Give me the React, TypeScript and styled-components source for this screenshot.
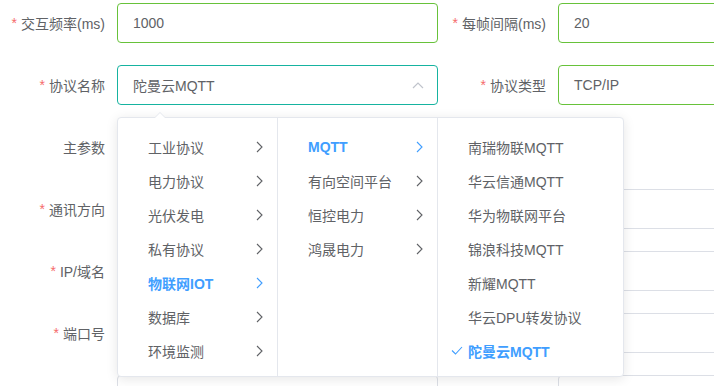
import React from 'react'
import styled, { createGlobalStyle } from 'styled-components'

const GlobalStyle = createGlobalStyle`
	html, body {
		margin: 0;
		padding: 0;
		overflow: hidden;
		background: #ffffff;
	}
	body {
		font-family: 'Liberation Sans', 'Noto Sans CJK SC', sans-serif;
		-webkit-font-smoothing: antialiased;
	}
	* {
		box-sizing: border-box;
	}
`

const FormGrid = styled.div`
	position: relative;
	width: 714px;
	height: 386px;
	overflow: hidden;
	padding-top: 3px;
	display: grid;
	grid-template-columns: 117px 321px 120px 321px;
	grid-auto-rows: 40px;
	row-gap: 22px;
`

const FieldLabel = styled.label`
	display: flex;
	align-items: center;
	justify-content: flex-end;
	padding-right: 12px;
	font-size: 14px;
	color: #606266;
	white-space: nowrap;
`

const Asterisk = styled.span`
	color: #f56c6c;
	margin-right: 4px;
`

const InputBox = styled.div<{ tone?: 'ok' | 'focus' | 'idle' }>`
	display: flex;
	align-items: center;
	justify-content: space-between;
	padding: 0 13px 0 15px;
	border-radius: 4px;
	border: 1px solid
		${(p) => (p.tone === 'ok' ? '#67c23a' : p.tone === 'focus' ? '#16b3a0' : '#dcdfe6')};
	font-size: 14px;
	color: #606266;
	background: #ffffff;
`

const Empty = styled.div``

const Cascader = styled.div`
	position: absolute;
	left: 117px;
	top: 117px;
	display: flex;
	height: 260px;
	background: #ffffff;
	border: 1px solid #e4e7ed;
	border-radius: 4px;
	box-shadow: 0 2px 12px 0 rgba(0, 0, 0, 0.1);
	z-index: 10;

	&::before,
	&::after {
		content: '';
		position: absolute;
		left: 36px;
		width: 0;
		height: 0;
		border: 6px solid transparent;
		border-top-width: 0;
	}
	&::before {
		top: -6px;
		border-bottom-color: #e4e7ed;
	}
	&::after {
		top: -5px;
		border-bottom-color: #ffffff;
	}
`

const Menu = styled.ul<{ width: number }>`
	list-style: none;
	margin: 0;
	padding: 12px 0 10px 0;
	width: ${(p) => p.width}px;
	&:not(:last-child) {
		border-right: 1px solid #e4e7ed;
	}
`

const MenuItem = styled.li<{ active?: boolean }>`
	position: relative;
	height: 34px;
	display: flex;
	align-items: center;
	padding: 0 14px 0 30px;
	font-size: 14px;
	color: ${(p) => (p.active ? '#409eff' : '#606266')};
	font-weight: ${(p) => (p.active ? 700 : 400)};
	white-space: nowrap;
`

const ItemLabel = styled.span`
	flex: 1;
`

const CheckMark = styled.svg`
	position: absolute;
	left: 13px;
	top: 12px;
`

const Chevron = ({ color }: { color: string }) => (
	<svg width="7" height="12" viewBox="0 0 7 12">
		<path d="M1 1 L6 6 L1 11" fill="none" stroke={color} strokeWidth="1.1" />
	</svg>
)

const ArrowUp = () => (
	<svg width="12" height="7" viewBox="0 0 12 7">
		<path d="M1 6 L6 1 L11 6" fill="none" stroke="#c0c4cc" strokeWidth="1.2" />
	</svg>
)

const Label = ({ text, required }: { text: string; required?: boolean }) => (
	<FieldLabel>
		{required && <Asterisk>*</Asterisk>}
		{text}
	</FieldLabel>
)

const level1 = ['工业协议', '电力协议', '光伏发电', '私有协议', '物联网IOT', '数据库', '环境监测']
const level2 = ['MQTT', '有向空间平台', '恒控电力', '鸿晟电力']
const level3 = [
	'南瑞物联MQTT',
	'华云信通MQTT',
	'华为物联网平台',
	'锦浪科技MQTT',
	'新耀MQTT',
	'华云DPU转发协议',
	'陀曼云MQTT',
]

export default function App() {
	return (
		<>
			<GlobalStyle />
			<FormGrid>
				<Label text="交互频率(ms)" required />
				<InputBox tone="ok">1000</InputBox>
				<Label text="每帧间隔(ms)" required />
				<InputBox tone="ok">20</InputBox>

				<Label text="协议名称" required />
				<InputBox tone="focus">
					<span>陀曼云MQTT</span>
					<ArrowUp />
				</InputBox>
				<Label text="协议类型" required />
				<InputBox tone="ok">TCP/IP</InputBox>

				<Label text="主参数" />
				<Empty />
				<Empty />
				<Empty />

				<Label text="通讯方向" required />
				<InputBox />
				<Label text="" />
				<InputBox />

				<Label text="IP/域名" required />
				<InputBox />
				<Label text="" />
				<InputBox />

				<Label text="端口号" required />
				<InputBox />
				<Label text="" />
				<InputBox />

				<Label text="" />
				<InputBox />
				<Label text="" />
				<InputBox />

				<Cascader>
					<Menu width={160}>
						{level1.map((x) => (
							<MenuItem key={x} active={x === '物联网IOT'}>
								<ItemLabel>{x}</ItemLabel>
								<Chevron color={x === '物联网IOT' ? '#409eff' : '#606266'} />
							</MenuItem>
						))}
					</Menu>
					<Menu width={160}>
						{level2.map((x) => (
							<MenuItem key={x} active={x === 'MQTT'}>
								<ItemLabel>{x}</ItemLabel>
								<Chevron color={x === 'MQTT' ? '#409eff' : '#606266'} />
							</MenuItem>
						))}
					</Menu>
					<Menu width={185}>
						{level3.map((x) => (
							<MenuItem key={x} active={x === '陀曼云MQTT'}>
								{x === '陀曼云MQTT' && (
									<CheckMark width="12" height="9" viewBox="0 0 12 9">
										<path d="M1 4.5 L4.5 8 L11 1" fill="none" stroke="#409eff" strokeWidth="1.1" />
									</CheckMark>
								)}
								<ItemLabel>{x}</ItemLabel>
							</MenuItem>
						))}
					</Menu>
				</Cascader>
			</FormGrid>
		</>
	)
}
